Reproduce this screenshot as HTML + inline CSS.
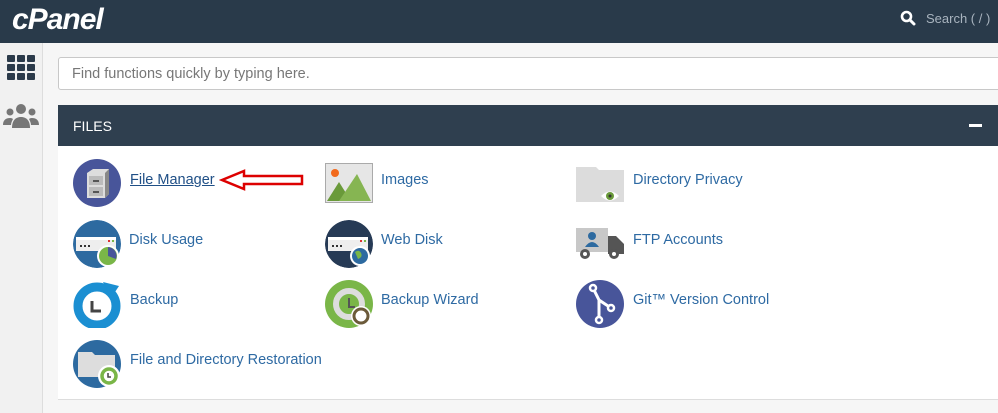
<!DOCTYPE html>
<html><head><style>
*{margin:0;padding:0;box-sizing:border-box}
body{width:998px;height:413px;overflow:hidden;background:#f6f6f6;font-family:"Liberation Sans",sans-serif;position:relative}
.hdr{position:absolute;left:0;top:0;width:998px;height:43px;background:#293a4a}
.logo{position:absolute;left:12px;top:3px;color:#fff;font-size:30px;font-weight:bold;font-style:italic;letter-spacing:-1px}
.srch{position:absolute;left:926px;top:11px;color:#a9b4bf;font-size:13px}
.side{position:absolute;left:0;top:43px;width:43px;height:370px;background:#f1f1f1;border-right:1px solid #ddd}
.box{position:absolute;left:58px;top:57px;width:950px;height:33px;background:#fff;border:1px solid #c8c8c8;border-radius:3px;color:#777;font-size:14.5px;padding:8px 0 0 13px}
.ph{position:absolute;left:58px;top:105px;width:950px;height:41px;background:#2f3f4f;color:#fff;font-size:14px;padding:13px 0 0 15px}
.minus{position:absolute;left:969px;top:124px;width:13px;height:3px;background:#fff}
.pb{position:absolute;left:58px;top:146px;width:950px;height:254px;background:#fff;border-bottom:1px solid #ddd}
.it{position:absolute;color:#2e6aa3;font-size:14.5px}
.ic{position:absolute}
</style></head><body>
<div class="hdr"><div class="logo">cPanel</div>
<svg style="position:absolute;left:900px;top:10px" width="16" height="16" viewBox="0 0 16 16"><circle cx="6.5" cy="6.5" r="4.5" fill="none" stroke="#fff" stroke-width="2.6"/><path d="M10 10l4 4" stroke="#fff" stroke-width="3" stroke-linecap="round"/></svg>
<div class="srch">Search ( / )</div></div>
<div class="side">
<svg style="position:absolute;left:7px;top:12px" width="28" height="26"><g fill="#2b3a4a"><rect x="0" y="0" width="8" height="7" rx="1"/><rect x="10" y="0" width="8" height="7" rx="1"/><rect x="20" y="0" width="8" height="7" rx="1"/><rect x="0" y="9" width="8" height="7" rx="1"/><rect x="10" y="9" width="8" height="7" rx="1"/><rect x="20" y="9" width="8" height="7" rx="1"/><rect x="0" y="18" width="8" height="7" rx="1"/><rect x="10" y="18" width="8" height="7" rx="1"/><rect x="20" y="18" width="8" height="7" rx="1"/></g></svg>
<svg style="position:absolute;left:3px;top:60px" width="36" height="26"><g fill="#777"><circle cx="18" cy="6" r="5"/><circle cx="7" cy="9" r="3.5"/><circle cx="29" cy="9" r="3.5"/><path d="M9 25c0-8 4-11 9-11s9 3 9 11z"/><path d="M0 22c0-5 3-7 7-7 2 0 3 1 3 1-1 2-2 4-2 6z"/><path d="M36 22c0-5-3-7-7-7-2 0-3 1-3 1 1 2 2 4 2 6z"/></g></svg>
</div>
<div class="box">Find functions quickly by typing here.</div>
<div class="ph">FILES</div><div class="minus"></div>
<div class="pb"></div>
<svg width="0" height="0" style="position:absolute"><defs><clipPath id="cc"><circle cx="24" cy="24" r="24"/></clipPath></defs></svg>
<!-- row1 -->
<svg class="ic" style="left:73px;top:159px" width="48" height="48"><circle cx="24" cy="24" r="24" fill="#48559a"/><path d="M14 14l6-4h16v25l-4 4H14z" fill="#ddd"/><path d="M32 14l4-4v25l-4 4z" fill="#888"/><rect x="16" y="17" width="14" height="9" fill="#bbb"/><rect x="16" y="28" width="14" height="9" fill="#bbb"/><rect x="20" y="21" width="6" height="2" fill="#555"/><rect x="20" y="32" width="6" height="2" fill="#555"/></svg>
<div class="it" style="left:130px;top:172px;text-decoration:underline;color:#1f4f86">File Manager</div>
<svg class="ic" style="left:219px;top:168px" width="86" height="24"><path d="M3 12l22-9v5h58v8H25v5z" fill="none" stroke="#d00" stroke-width="2.5"/></svg>
<svg class="ic" style="left:325px;top:163px" width="48" height="40"><rect x="0.5" y="0.5" width="47" height="39" fill="#e6e6e6" stroke="#aaa"/><circle cx="10" cy="10" r="4" fill="#f26a1c"/><path d="M2 38l12-19 12 19z" fill="#6a9a3a"/><path d="M14 38l18-27 14 27z" fill="#86b552"/></svg>
<div class="it" style="left:381px;top:172px">Images</div>
<svg class="ic" style="left:576px;top:165px" width="48" height="37"><path d="M0 2h20l3 3h25v32H0z" fill="#dcdcdc"/><path d="M25 31q9-9 18 0q-9 9-18 0z" fill="#fff"/><circle cx="34" cy="31" r="4" fill="#6a9a3a"/><circle cx="34" cy="31" r="1.5" fill="#333"/></svg>
<div class="it" style="left:633px;top:172px">Directory Privacy</div>
<!-- row2 -->
<svg class="ic" style="left:73px;top:220px" width="48" height="48"><g clip-path="url(#cc)"><circle cx="24" cy="24" r="24" fill="#2d6aa0"/><rect x="3" y="17" width="40" height="14" fill="#eee"/><rect x="3" y="17" width="40" height="3" fill="#fff"/><rect x="7" y="25" width="2" height="2" fill="#333"/><rect x="11" y="25" width="2" height="2" fill="#333"/><rect x="15" y="25" width="2" height="2" fill="#333"/><rect x="35" y="20" width="2" height="2" fill="#d33"/><rect x="39" y="20" width="2" height="2" fill="#7ab648"/></g><circle cx="35" cy="36" r="11" fill="#fff"/><circle cx="35" cy="36" r="9" fill="#7ab648"/><path d="M35 36V27a9 9 0 0 1 8 12z" fill="#48559a"/></svg>
<div class="it" style="left:129px;top:232px">Disk Usage</div>
<svg class="ic" style="left:325px;top:220px" width="48" height="48"><g clip-path="url(#cc)"><circle cx="24" cy="24" r="24" fill="#263a55"/><rect x="3" y="17" width="40" height="14" fill="#eee"/><rect x="3" y="17" width="40" height="3" fill="#fff"/><rect x="7" y="25" width="2" height="2" fill="#333"/><rect x="11" y="25" width="2" height="2" fill="#333"/><rect x="15" y="25" width="2" height="2" fill="#333"/><rect x="35" y="20" width="2" height="2" fill="#d33"/><rect x="39" y="20" width="2" height="2" fill="#7ab648"/></g><circle cx="35" cy="36" r="10" fill="#fff"/><circle cx="35" cy="36" r="8" fill="#2d6aa0"/><path d="M30 32q4-3 6 1t-3 6z" fill="#7ab648"/></svg>
<div class="it" style="left:381px;top:232px">Web Disk</div>
<svg class="ic" style="left:576px;top:228px" width="48" height="32"><rect x="0" y="0" width="32" height="24" fill="#c8c8c8"/><circle cx="16" cy="8" r="4" fill="#2d6aa0"/><path d="M9 19q7-10 14 0z" fill="#2d6aa0"/><path d="M32 8h8l8 8v10H32z" fill="#555"/><circle cx="9" cy="26" r="5" fill="#555"/><circle cx="9" cy="26" r="2" fill="#fff"/><circle cx="38" cy="26" r="5" fill="#555"/><circle cx="38" cy="26" r="2" fill="#fff"/></svg>
<div class="it" style="left:633px;top:232px">FTP Accounts</div>
<!-- row3 -->
<svg class="ic" style="left:73px;top:280px" width="48" height="48"><circle cx="24" cy="26" r="19" fill="none" stroke="#1b8fd2" stroke-width="9"/><path d="M30 2l16 4-8 12z" fill="#1b8fd2"/><path d="M19 21v10h9" fill="none" stroke="#444" stroke-width="3"/></svg>
<div class="it" style="left:130px;top:292px">Backup</div>
<svg class="ic" style="left:325px;top:280px" width="48" height="48"><circle cx="24" cy="24" r="24" fill="#7ab648"/><circle cx="24" cy="24" r="13" fill="none" stroke="#ddd" stroke-width="6"/><path d="M24 18v9h6" fill="none" stroke="#555" stroke-width="2"/><circle cx="36" cy="36" r="10" fill="#fff"/><circle cx="36" cy="36" r="7" fill="none" stroke="#6b5a3a" stroke-width="3"/></svg>
<div class="it" style="left:381px;top:292px">Backup Wizard</div>
<svg class="ic" style="left:576px;top:280px" width="48" height="48"><circle cx="24" cy="24" r="24" fill="#48559a"/><path d="M17 8l6 12v20M23 20l12 8" stroke="#fff" stroke-width="3" fill="none"/><circle cx="17" cy="8" r="3" fill="#48559a" stroke="#fff" stroke-width="2.5"/><circle cx="35" cy="28" r="3" fill="#48559a" stroke="#fff" stroke-width="2.5"/><circle cx="23" cy="40" r="3" fill="#48559a" stroke="#fff" stroke-width="2.5"/></svg>
<div class="it" style="left:633px;top:292px">Git™ Version Control</div>
<!-- row4 -->
<svg class="ic" style="left:73px;top:340px" width="48" height="48"><circle cx="24" cy="24" r="24" fill="#2d6aa0"/><path d="M5 12h14l3 3h20v22H5z" fill="#ddd"/><circle cx="36" cy="36" r="11" fill="#fff"/><circle cx="36" cy="36" r="7" fill="none" stroke="#7ab648" stroke-width="3.5"/><path d="M35 33v4h3" stroke="#444" stroke-width="1.5" fill="none"/></svg>
<div class="it" style="left:130px;top:352px">File and Directory Restoration</div>
</body></html>
